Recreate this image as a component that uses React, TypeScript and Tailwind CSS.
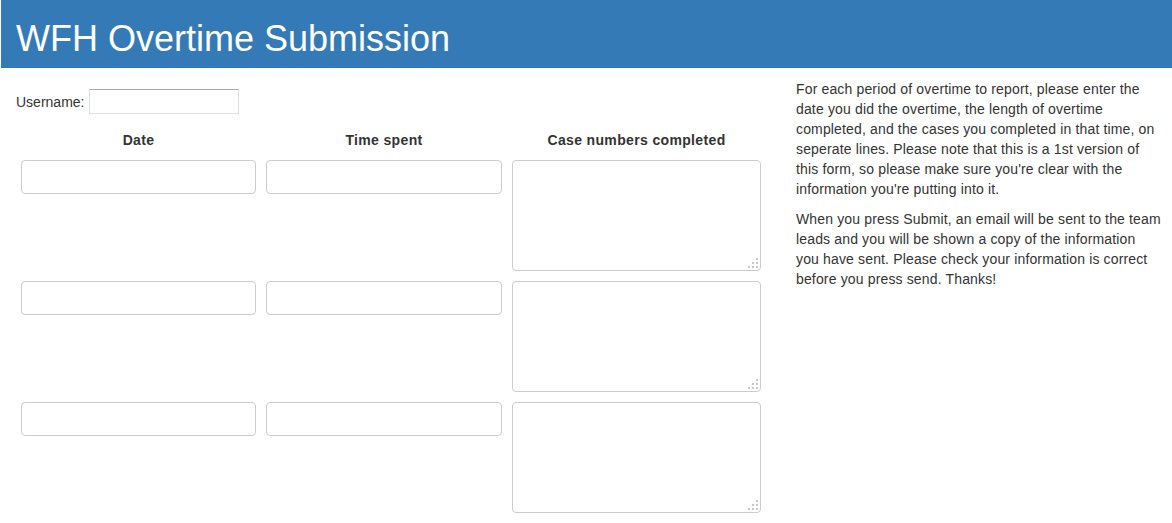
import React from 'react';

const ResizeDots: React.FC = () => (
  <svg
    className="absolute right-[2px] bottom-[2px] pointer-events-none"
    width="12"
    height="12"
    viewBox="0 0 12 12"
  >
    {[
      [9, 1],
      [5, 5],
      [9, 5],
      [1, 9],
      [5, 9],
      [9, 9],
    ].map(([x, y]) => (
      <rect key={`${x}-${y}`} x={x} y={y} width="2" height="2" fill="#c8c8c8" />
    ))}
  </svg>
);

const EntryRow: React.FC = () => (
  <div className="grid grid-cols-[235px_236px_249px] gap-x-[10px] px-[5px] h-[111px]">
    <input
      type="text"
      className="h-[34px] w-full rounded-[4px] border border-[#cccccc] bg-white px-3 outline-none"
    />
    <input
      type="text"
      className="h-[34px] w-full rounded-[4px] border border-[#cccccc] bg-white px-3 outline-none"
    />
    <div className="relative h-[111px]">
      <textarea className="block h-full w-full resize-none rounded-[4px] border border-[#cccccc] bg-white px-3 py-1.5 outline-none" />
      <ResizeDots />
    </div>
  </div>
);

// lines broken where the original page wraps them
const intro = [
  'For each period of overtime to report, please enter the',
  'date you did the overtime, the length of overtime',
  'completed, and the cases you completed in that time, on',
  'seperate lines. Please note that this is a 1st version of',
  "this form, so please make sure you're clear with the",
  "information you're putting into it.",
];

const outro = [
  'When you press Submit, an email will be sent to the team',
  'leads and you will be shown a copy of the information',
  'you have sent. Please check your information is correct',
  'before you press send. Thanks!',
];

export default function App() {
  return (
    <div className="min-h-screen bg-white pl-px text-[14px] leading-[20px] text-[#333333] font-['Liberation_Sans',Arial,sans-serif]">
      <header className="h-[68px] bg-[#337ab7] pl-[15px] pt-[19px]">
        <h1 className="text-[36px] leading-[40px] font-normal text-white">WFH Overtime Submission</h1>
      </header>

      <div className="flex">
        <div className="w-[781px] px-[15px]">
          <div className="mt-[21px] flex items-center h-[25px]">
            <label className="mr-[5px]">Username:</label>
            <input
              type="text"
              className="h-[25px] w-[150px] border border-[#dde1e6] border-t-[#ababab] bg-white px-1 outline-none"
            />
          </div>

          <div className="mt-[16px] grid grid-cols-[235px_236px_249px] gap-x-[10px] px-[5px] font-bold text-center tracking-[0.35px]">
            <div>Date</div>
            <div>Time spent</div>
            <div>Case numbers completed</div>
          </div>

          <div className="mt-[10px] flex flex-col gap-[10px]">
            <EntryRow />
            <EntryRow />
            <EntryRow />
          </div>
        </div>

        <div className="w-[391px] px-[15px] pt-[11px] tracking-[0.15px]">
          <p className="mb-[10px]">
            {intro.map((line) => (
              <span key={line} className="block whitespace-nowrap">
                {line}
              </span>
            ))}
          </p>
          <p>
            {outro.map((line) => (
              <span key={line} className="block whitespace-nowrap">
                {line}
              </span>
            ))}
          </p>
        </div>
      </div>
    </div>
  );
}
